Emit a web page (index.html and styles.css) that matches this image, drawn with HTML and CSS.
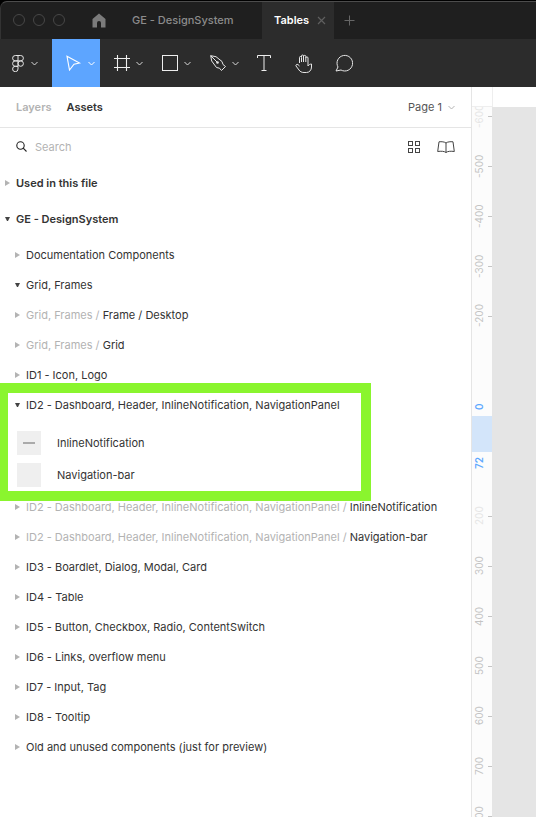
FILE: index.html
```html
<!DOCTYPE html>
<html lang="en">
<head>
  <meta charset="UTF-8" />
  <meta name="viewport" content="width=device-width, initial-scale=1" />
  <title>GE - DesignSystem</title>
  <link rel="stylesheet" href="styles.css">
</head>
<body>

<header class="titlebar">
  <div class="tabbar">
    <div class="lights"><i></i><i></i><i></i></div>
    <svg class="home" width="14" height="15" viewBox="0 0 14 15"><path d="M7 0.5 L13.5 6 V14.5 H9 V10 A2 2 0 0 0 5 10 V14.5 H0.5 V6 Z" fill="#7b7b7b"/></svg>
    <span class="tab-title">GE - DesignSystem</span>
    <div class="tab-active">
      <span>Tables</span>
      <svg width="9" height="9" viewBox="0 0 9 9"><path d="M1 1 L8 8 M8 1 L1 8" stroke="#5f5f5f" stroke-width="1.2"/></svg>
    </div>
    <svg class="plus" width="11" height="11" viewBox="0 0 11 11"><path d="M5.5 0.5 V10.5 M0.5 5.5 H10.5" stroke="#666" stroke-width="1"/></svg>
  </div>
</header>

<nav class="toolbar">
  <div class="tool tool-logo">
    <svg width="12" height="17" viewBox="0 0 12 17" fill="none" stroke="#e6e6e6" stroke-width="1"><path d="M6 0.5 H3.3 A2.7 2.7 0 0 0 3.3 5.9 H6 Z M6 0.5 H8.7 A2.7 2.7 0 0 1 8.7 5.9 H6 M6 5.9 H3.3 A2.7 2.7 0 0 0 3.3 11.3 H6 Z M6 11.3 H3.3 A2.7 2.7 0 1 0 6 14 Z"/><circle cx="8.7" cy="8.6" r="2.7"/></svg>
    <svg class="chev" width="7" height="5" viewBox="0 0 7 5"><path d="M0.5 1 L3.5 4 L6.5 1" fill="none" stroke="#d8d8d8"/></svg>
  </div>
  <div class="tool tool-active">
    <svg width="16" height="16" viewBox="0 0 16 16"><path d="M1 1.3 L13.5 8 L8 9.2 L3.5 15 Z" fill="none" stroke="#fff" stroke-width="1.1"/></svg>
    <svg class="chev" width="7" height="5" viewBox="0 0 7 5"><path d="M0.5 1 L3.5 4 L6.5 1" fill="none" stroke="#fff"/></svg>
  </div>
  <div class="tool">
    <svg width="16" height="16" viewBox="0 0 16 16"><path d="M3.5 0 V16 M12.5 0 V16 M0 3.5 H16 M0 12.5 H16" fill="none" stroke="#eee" stroke-width="1.1"/></svg>
    <svg class="chev" width="7" height="5" viewBox="0 0 7 5"><path d="M0.5 1 L3.5 4 L6.5 1" fill="none" stroke="#d8d8d8"/></svg>
  </div>
  <div class="tool">
    <svg width="16" height="16" viewBox="0 0 16 16"><rect x="0.5" y="0.5" width="15" height="15" fill="none" stroke="#eee"/></svg>
    <svg class="chev" width="7" height="5" viewBox="0 0 7 5"><path d="M0.5 1 L3.5 4 L6.5 1" fill="none" stroke="#d8d8d8"/></svg>
  </div>
  <div class="tool">
    <svg width="16" height="16" viewBox="0 0 16 16" fill="none" stroke="#e6e6e6"><path d="M0.7 0.7 L6 1.7 L12 6.5 L13 9.5 L15.5 11.5 L11.5 15.5 L9.5 13.2 L6.5 12.5 L1.7 6 Z"/><path d="M0.7 0.7 L7 7"/><circle cx="7.5" cy="7.5" r="1.3" fill="#e6e6e6" stroke="none"/></svg>
    <svg class="chev" width="7" height="5" viewBox="0 0 7 5"><path d="M0.5 1 L3.5 4 L6.5 1" fill="none" stroke="#d8d8d8"/></svg>
  </div>
  <div class="tool tool-plain">
    <svg width="14" height="16" viewBox="0 0 14 16"><path d="M0.5 3 V0.5 H13.5 V3 M7 0.5 V15.5 M4.5 15.5 H9.5" fill="none" stroke="#eee" stroke-width="1"/></svg>
  </div>
  <div class="tool tool-plain">
    <svg width="18" height="19" viewBox="0 0 18 19" fill="none" stroke="#e6e6e6" stroke-width="1"><path d="M4.5 9 V3.5 A1 1 0 0 1 6.5 3.5 V8 M6.5 3 V2 A1 1 0 0 1 8.5 2 V8 M8.5 2.5 A1 1 0 0 1 10.8 2.5 V8 M10.8 4 A1 1 0 0 1 13 4 V12 C13.5 11 15 10 16.5 10 V13 C16.5 16 14.5 18.5 11.5 18.5 H9 C6.5 18.5 5 17.5 4 16 L1 12 C0.5 11 1.8 9.8 3 10.6 L4.5 12"/></svg>
  </div>
  <div class="tool tool-plain">
    <svg width="18" height="18" viewBox="0 0 18 18"><path d="M1 17 L3 13 A7.8 7.8 0 1 1 6 16 Z" fill="none" stroke="#e6e6e6" stroke-width="1"/></svg>
  </div>
</nav>

<div class="workspace">
  <aside class="panel">
    <div class="panel-tabs">
      <span class="tab-layers">Layers</span>
      <span class="tab-assets">Assets</span>
      <span class="page-picker">Page 1
        <svg width="7" height="5" viewBox="0 0 7 5"><path d="M0.5 1 L3.5 4 L6.5 1" fill="none" stroke="#b3b3b3"/></svg>
      </span>
    </div>

    <div class="search">
      <svg width="11" height="11" viewBox="0 0 11 11" fill="none" stroke="#222" stroke-width="1.1"><circle cx="4.5" cy="4.5" r="3.7"/><path d="M7.2 7.2 L10.5 10.5"/></svg>
      <span class="search-text">Search</span>
      <svg class="grid-icon" width="12" height="12" viewBox="0 0 12 12" fill="none" stroke="#444"><rect x="0.5" y="0.5" width="4" height="4"/><rect x="7.5" y="0.5" width="4" height="4"/><rect x="0.5" y="7.5" width="4" height="4"/><rect x="7.5" y="7.5" width="4" height="4"/></svg>
      <svg class="book-icon" width="18" height="12" viewBox="0 0 18 12" fill="none" stroke="#444"><path d="M9 2 C7.5 0.8 4.5 0.5 2 0.8 L0.7 10.5 C4 10 7.5 10.2 9 11.5 C10.5 10.2 14 10 17.3 10.5 L16 0.8 C13.5 0.5 10.5 0.8 9 2 Z M9 2 V11.5"/></svg>
    </div>

    <div class="section"><i class="caret"></i><span>Used in this file</span></div>
    <div class="section"><i class="caret open"></i><span>GE - DesignSystem</span></div>

    <ul class="tree">
      <li class="row"><i class="caret"></i><span>Documentation Components</span></li>
      <li class="row"><i class="caret open"></i><span>Grid, Frames</span></li>
      <li class="row"><i class="caret"></i><span><span class="dim">Grid, Frames /</span> Frame / Desktop</span></li>
      <li class="row"><i class="caret"></i><span><span class="dim">Grid, Frames /</span> Grid</span></li>
      <li class="row"><i class="caret"></i><span>ID1 - Icon, Logo</span></li>
      <li class="row"><i class="caret open"></i><span>ID2 - Dashboard, Header, InlineNotification, NavigationPanel</span></li>
    </ul>

    <ul class="components">
      <li class="component"><span class="thumb"><b></b></span>InlineNotification</li>
      <li class="component"><span class="thumb"></span>Navigation-bar</li>
    </ul>

    <ul class="tree">
      <li class="row"><i class="caret"></i><span><span class="dim">ID2 - Dashboard, Header, InlineNotification, NavigationPanel /</span> InlineNotification</span></li>
      <li class="row"><i class="caret"></i><span><span class="dim">ID2 - Dashboard, Header, InlineNotification, NavigationPanel /</span> Navigation-bar</span></li>
      <li class="row"><i class="caret"></i><span>ID3 - Boardlet, Dialog, Modal, Card</span></li>
      <li class="row"><i class="caret"></i><span>ID4 - Table</span></li>
      <li class="row"><i class="caret"></i><span>ID5 - Button, Checkbox, Radio, ContentSwitch</span></li>
      <li class="row"><i class="caret"></i><span>ID6 - Links, overflow menu</span></li>
      <li class="row"><i class="caret"></i><span>ID7 - Input, Tag</span></li>
      <li class="row"><i class="caret"></i><span>ID8 - Tooltip</span></li>
      <li class="row"><i class="caret"></i><span>Old and unused components (just for preview)</span></li>
    </ul>
  </aside>

  <div class="ruler">
    <div class="ruler-corner"></div>
    <div class="ruler-band"></div>
    <span class="mark faint" style="top:29px">-600</span>
    <span class="mark" style="top:79px">-500</span>
    <span class="mark" style="top:129px">-400</span>
    <span class="mark" style="top:179px">-300</span>
    <span class="mark" style="top:229px">-200</span>
    <span class="mark faint" style="top:429px">200</span>
    <span class="mark" style="top:479px">300</span>
    <span class="mark" style="top:529px">400</span>
    <span class="mark" style="top:579px">500</span>
    <span class="mark" style="top:629px">600</span>
    <span class="mark" style="top:679px">700</span>
    <span class="mark" style="top:729px">800</span>
    <span class="mark blue" style="top:320px">0</span>
    <span class="mark blue" style="top:376px">72</span>
  </div>
  <div class="canvas">
    <div class="canvas-ruler"></div>
  </div>

  <div class="highlight"></div>
</div>

</body>
</html>
```

FILE: styles.css
```css
* {
  box-sizing: border-box;
}
html, body {
  height: 100%;
}
body {
  margin: 0;
  background: #fff;
  color: #333;
  font-family: Inter, 'Noto Sans', sans-serif;
  font-size: 11px;
  overflow: hidden;
  display: flex;
  flex-direction: column;
}
ul {
  list-style: none;
  margin: 0;
  padding: 0;
}

/* title bar */
.titlebar {
  height: 39px;
  flex: none;
  padding-top: 1px;
  background: #000;
}
.tabbar {
  height: 100%;
  display: flex;
  align-items: center;
  background: #1f1f1f;
  border-top: 1px solid #4c4c4c;
  border-left: 1px solid #333;
  border-top-left-radius: 7px;
  color: #8c8c8c;
  font-weight: 500;
}
.lights {
  display: flex;
  gap: 8px;
  margin-left: 12px;
  margin-bottom: 1px;
}
.lights i {
  width: 12px;
  height: 12px;
  border: 1px solid #474747;
  border-radius: 50%;
}
.home {
  margin-left: 27px;
  margin-bottom: 1px;
}
.tab-title {
  margin-left: 26px;
  width: 130px;
  margin-bottom: 1px;
}
.tab-active {
  width: 72px;
  height: 100%;
  padding: 0 0 1px 12px;
  display: flex;
  align-items: center;
  gap: 8px;
  background: #2c2c2c;
  color: #fff;
  font-weight: 600;
}
.plus {
  margin-left: 10px;
  margin-bottom: 1px;
}

/* tools */
.toolbar {
  height: 48px;
  flex: none;
  display: flex;
  background: #2c2c2c;
}
.tool {
  width: 48px;
  padding-left: 14px;
  display: flex;
  align-items: center;
  gap: 6px;
}
.tool-logo {
  width: 52px;
  padding-left: 12px;
  gap: 7px;
}
.tool-active {
  background: #5da5ff;
}
.tool-plain {
  width: 40px;
  padding-left: 0;
  justify-content: center;
}

/* left panel */
.workspace {
  position: relative;
  flex: 1;
  display: flex;
  min-height: 0;
}
.panel {
  width: 472px;
  flex: none;
  border-right: 1px solid #e5e5e5;
}
.panel-tabs {
  height: 41px;
  padding: 0 16px;
  display: flex;
  align-items: center;
  gap: 15px;
  border-bottom: 1px solid #e5e5e5;
  font-weight: 600;
}
.tab-layers {
  color: #b3b3b3;
}
.page-picker {
  margin-left: auto;
  display: flex;
  align-items: center;
  gap: 6px;
  font-weight: 400;
  color: #555;
}
.search {
  height: 37px;
  padding: 0 16px;
  display: flex;
  align-items: center;
}
.search-text {
  margin-left: 8px;
  color: #b3b3b3;
}
.grid-icon {
  margin-left: auto;
}
.book-icon {
  margin-left: 17px;
}

.caret {
  flex: none;
  width: 5px;
  height: 0;
  border-style: solid;
  border-width: 3px 0 3px 5px;
  border-color: transparent transparent transparent #b3b3b3;
}
.caret.open {
  border-width: 4px 2.5px 0 2.5px;
  border-color: #444 transparent transparent transparent;
}
.section {
  height: 36px;
  padding-left: 5px;
  display: flex;
  align-items: center;
  gap: 6px;
  font-weight: 600;
}
.tree {
  padding-left: 15px;
}
.section + .tree {
  margin-top: 3px;
}
.row {
  height: 30px;
  display: flex;
  align-items: center;
  gap: 6px;
  white-space: nowrap;
}
.dim {
  color: #b3b3b3;
}
.components {
  margin: 7px 0 1px;
  padding-left: 17px;
}
.component {
  height: 32px;
  display: flex;
  align-items: center;
  gap: 16px;
}
.thumb {
  width: 24px;
  height: 24px;
  display: flex;
  align-items: center;
  justify-content: center;
  background: #efefef;
}
.thumb b {
  width: 12px;
  height: 2px;
  background: #aaa;
}

/* rulers */
.ruler {
  position: relative;
  width: 20px;
  flex: none;
  background: #fcfcfc;
}
.ruler-corner {
  position: relative;
  z-index: 1;
  height: 20px;
  background: #fff;
  border-bottom: 1px solid #eee;
}
.ruler-band {
  position: absolute;
  top: 329px;
  left: 0;
  width: 100%;
  height: 36px;
  background: #d3e5fa;
}
.mark {
  position: absolute;
  left: 0;
  width: 20px;
  height: 0;
  padding-left: 6px;
  display: flex;
  justify-content: center;
  align-items: center;
  writing-mode: vertical-rl;
  transform: rotate(180deg);
  color: #c4c4c4;
  font-size: 10px;
  line-height: 0;
}
.mark::after {
  content: "";
  position: absolute;
  left: 0;
  top: -1px;
  width: 4px;
  height: 1px;
  background: #c4c4c4;
}
.faint {
  color: #e6e6e6;
}
.blue {
  color: #5ca8ff;
  font-weight: 600;
}
.blue::after {
  display: none;
}
.canvas {
  flex: 1;
  background: #e5e5e5;
}
.canvas-ruler {
  height: 20px;
  background: #fff;
  border-left: 1px solid #eee;
}

/* annotation drawn over the list */
.highlight {
  position: absolute;
  top: 296px;
  left: 0;
  width: 371px;
  height: 118px;
  border: 10px solid #8af52e;
  border-left-width: 8px;
  pointer-events: none;
}
```
